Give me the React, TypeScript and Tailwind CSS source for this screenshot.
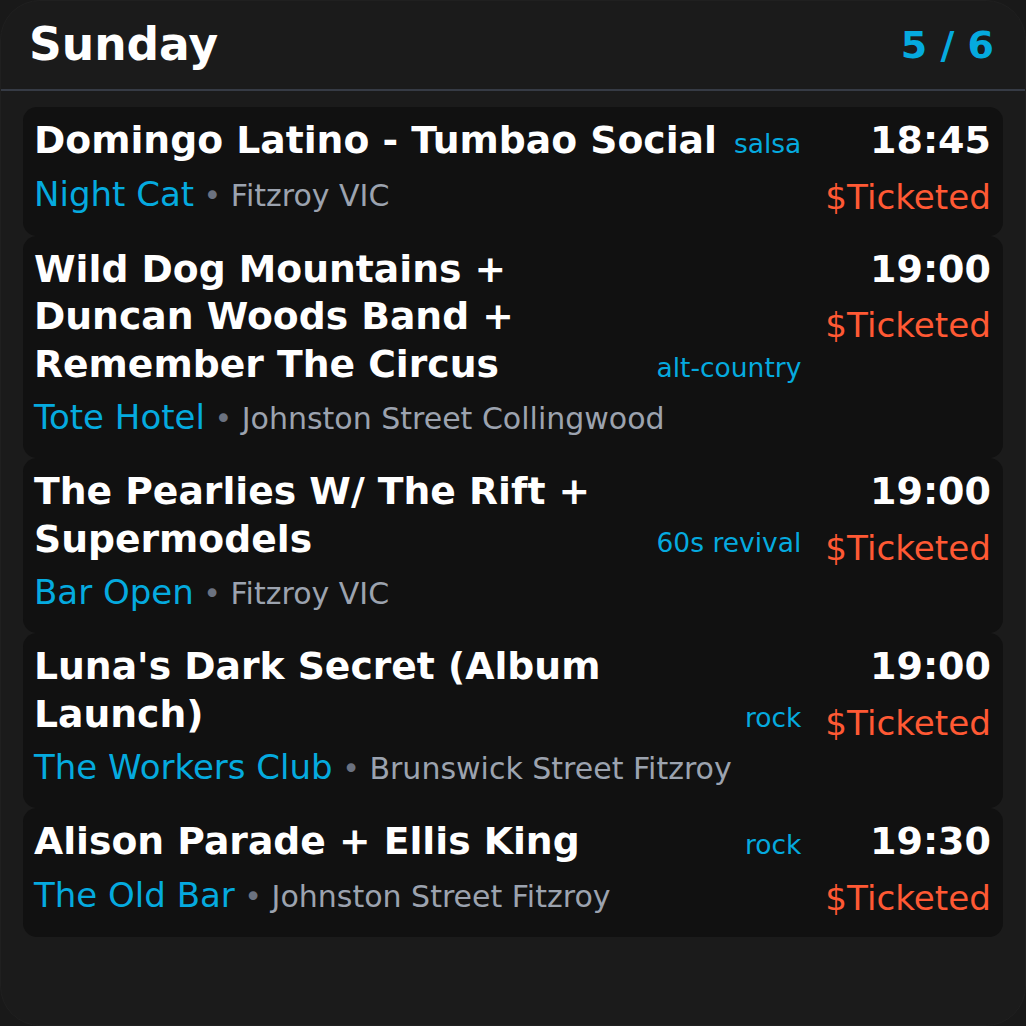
import React from 'react';

type Gig = {
  title: string;
  genre: string;
  venue: string;
  location: string;
  time: string;
  price: string;
};

const gigs: Gig[] = [
  {
    title: 'Domingo Latino - Tumbao Social',
    genre: 'salsa',
    venue: 'Night Cat',
    location: 'Fitzroy VIC',
    time: '18:45',
    price: '$Ticketed',
  },
  {
    title: 'Wild Dog Mountains + Duncan Woods Band + Remember The Circus',
    genre: 'alt-country',
    venue: 'Tote Hotel',
    location: 'Johnston Street Collingwood',
    time: '19:00',
    price: '$Ticketed',
  },
  {
    title: 'The Pearlies W/ The Rift + Supermodels',
    genre: '60s revival',
    venue: 'Bar Open',
    location: 'Fitzroy VIC',
    time: '19:00',
    price: '$Ticketed',
  },
  {
    title: "Luna's Dark Secret (Album Launch)",
    genre: 'rock',
    venue: 'The Workers Club',
    location: 'Brunswick Street Fitzroy',
    time: '19:00',
    price: '$Ticketed',
  },
  {
    title: 'Alison Parade + Ellis King',
    genre: 'rock',
    venue: 'The Old Bar',
    location: 'Johnston Street Fitzroy',
    time: '19:30',
    price: '$Ticketed',
  },
];

function GigCard({ gig }: { gig: Gig }) {
  return (
    <div className="grid grid-cols-[1fr_auto] gap-x-6 rounded-[14px] bg-[#111111] pt-[10px] pr-3 pb-[17px] pl-[11px]">
      {/* left: title, genre, venue */}
      <div className="flex min-w-0 flex-col">
        <div className="flex items-baseline-last">
          <h2 className="min-w-0 flex-1 text-[37.7px] leading-[47.5px] font-bold text-white">{gig.title}</h2>
          <span className="shrink-0 text-[26.5px] leading-[34px] text-[#05aadf]">{gig.genre}</span>
        </div>
        <div className="mt-[7px] flex items-baseline leading-[44px]">
          <span className="text-[34px] text-[#05aadf]">{gig.venue}</span>
          <span className="text-[30px] whitespace-pre text-[#6b7280]"> • </span>
          <span className="text-[30px] text-[#9ca3af]">{gig.location}</span>
        </div>
      </div>

      {/* right: time and price */}
      <div className="flex flex-col items-end">
        <span className="text-[38px] leading-[47.5px] font-bold text-white">{gig.time}</span>
        <span className="mt-[10px] text-[34.2px] leading-[44px] text-[#ff5934]">{gig.price}</span>
      </div>
    </div>
  );
}

export default function App() {
  return (
    <div className="h-[1026px] w-[1026px] bg-[#191919] font-['DejaVu_Sans',sans-serif]">
      <div className="flex h-full w-full flex-col overflow-hidden rounded-[40px] border border-[#202020] bg-[#1b1b1b]">
        {/* header */}
        <div className="flex h-[90px] shrink-0 items-center justify-between border-b-2 border-[#363b45] pr-[31px] pl-[28px]">
          <h1 className="text-[45.5px] font-bold text-white">Sunday</h1>
          <span className="text-[38px] font-bold text-[#05aadf]">5 / 6</span>
        </div>

        {/* list */}
        <div className="flex flex-col px-[22px] pt-[16px]">
          {gigs.map((gig, i) => (
            <GigCard key={i} gig={gig} />
          ))}
        </div>
      </div>
    </div>
  );
}
